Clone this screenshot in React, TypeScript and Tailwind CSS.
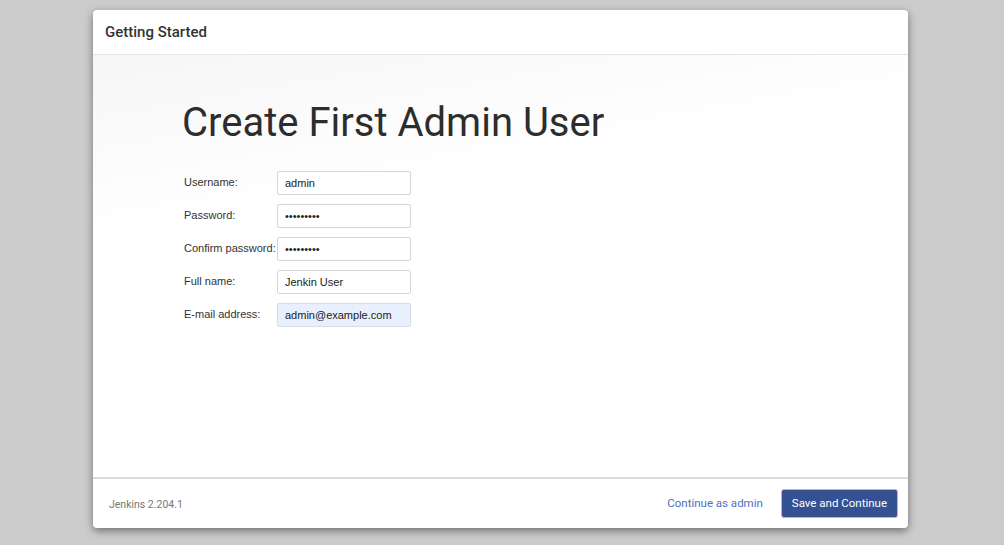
import React from 'react';

const FIELDS: { label: string; value: string; type: string; autofill?: boolean }[] = [
  { label: 'Username:', value: 'admin', type: 'text' },
  { label: 'Password:', value: 'password1', type: 'password' },
  { label: 'Confirm password:', value: 'password1', type: 'password' },
  { label: 'Full name:', value: 'Jenkin User', type: 'text' },
  { label: 'E-mail address:', value: 'admin@example.com', type: 'text', autofill: true },
];

export default function App() {
  return (
    <div className="h-[545px] w-full overflow-hidden bg-[#cccccc] pt-[10px] pl-[93px]">
      <div className="flex h-[518px] w-[815px] flex-col overflow-hidden rounded-[4px] bg-white shadow-[0_3px_9px_rgba(0,0,0,0.45)]">
        <div className="flex h-[45px] shrink-0 items-center border-b border-[#e5e5e5] px-[12px]">
          <h4 className="text-[15px] font-medium text-[#333] [font-family:Roboto,'Liberation_Sans',sans-serif]">
            Getting Started
          </h4>
        </div>

        <div className="flex-1 bg-[linear-gradient(170deg,#f6f6f6_0%,#fbfbfb_18%,#ffffff_32%)] pl-[89px] pt-[46px]">
          <h1 className="text-[40px] leading-[44px] font-normal text-[#2d2d2d] [font-family:Roboto,'Liberation_Sans',sans-serif]">
            Create First Admin User
          </h1>
          <div className="ml-[2px] mt-[26px] flex flex-col gap-[9px] [font-family:'Liberation_Sans',Arial,sans-serif]">
            {FIELDS.map((f) => (
              <div key={f.label} className="flex items-start">
                <label className="w-[93px] pt-[5px] text-[11px] leading-[13px] text-[#333]">{f.label}</label>
                <input
                  readOnly
                  type={f.type}
                  value={f.value}
                  className={`h-[24px] w-[134px] rounded-[2px] border px-[7px] text-[11px] text-[#222] outline-none ${
                    f.autofill ? 'border-[#d8dce6] bg-[#e8f0fe]' : 'border-[#d5d5d5] bg-white'
                  }`}
                />
              </div>
            ))}
          </div>
        </div>

        <div className="flex h-[51px] shrink-0 items-center justify-between border-t-2 border-[#dddddd] pl-[16px] pr-[10px] [font-family:Roboto,'Liberation_Sans',sans-serif]">
          <span className="pt-[3px] text-[10.5px] text-[#777]">Jenkins 2.204.1</span>
          <div className="flex items-center gap-[18px]">
            <a className="text-[11.5px] text-[#4a72c2]">Continue as admin</a>
            <button className="h-[29px] rounded-[3px] border border-[#f2a57e] bg-[#335193] px-[10px] text-[11.5px] text-white">
              Save and Continue
            </button>
          </div>
        </div>
      </div>
    </div>
  );
}
